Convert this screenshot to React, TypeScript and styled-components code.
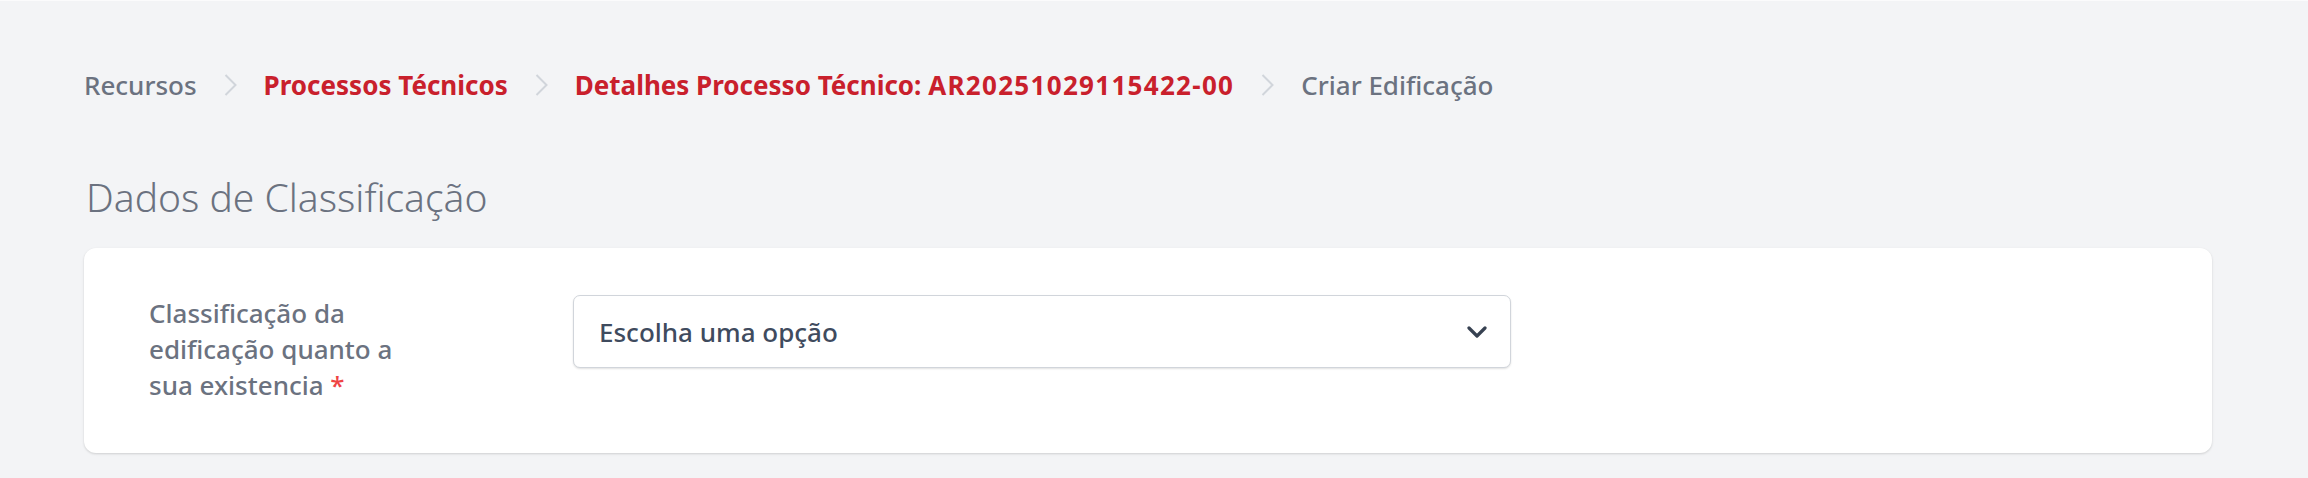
import { styled, createGlobalStyle } from "styled-components";

const GlobalStyle = createGlobalStyle`
    html, body {
        margin: 0;
        padding: 0;
        background: #f3f4f6;
        font-family: "Noto Sans", "Open Sans", sans-serif;
    }
`;

const Page = styled.main`
    min-height: 478px;
    box-sizing: border-box;
    border-top: 1px solid #fbfbfc;
    padding: 66px 96px 0 84px;
`;

const Crumbs = styled.nav`
    display: flex;
    align-items: center;
    gap: 27px;
    height: 36px;
`;

const Crumb = styled.a<{ $active?: boolean }>`
    font-size: 26px;
    line-height: 36px;
    font-weight: ${(p) => (p.$active ? 700 : 500)};
    color: ${(p) => (p.$active ? "#c9202c" : "#6b7280")};
    text-decoration: none;
    white-space: nowrap;
`;

const Code = styled.span`
    letter-spacing: 1.3px;
`;

const Title = styled.h2`
    margin: 70px 0 0 2px;
    font-size: 39px;
    line-height: 48px;
    font-weight: 300;
    color: #6b7280;
`;

const Card = styled.section`
    margin-top: 27px;
    background: #fff;
    border-radius: 12px;
    box-shadow: 0 1px 3px rgba(0, 0, 0, 0.1), 0 1px 2px rgba(0, 0, 0, 0.06);
    padding: 47px 65px 50px;
    display: grid;
    grid-template-columns: 424px 938px;
    align-items: start;
`;

const Label = styled.label`
    max-width: 265px;
    font-size: 26px;
    line-height: 36px;
    font-weight: 500;
    color: #6b7280;
`;

const Required = styled.span`
    color: #ef4444;
`;

const SelectBox = styled.div`
    box-sizing: border-box;
    height: 73px;
    display: flex;
    align-items: center;
    justify-content: space-between;
    padding: 0 23px 0 25px;
    border: 1px solid #d1d5db;
    border-radius: 7px;
    box-shadow: 0 1px 2px rgba(0, 0, 0, 0.12);
    background: #fff;
    font-size: 26px;
    font-weight: 500;
    color: #3f4b5e;
`;

function Separator() {
    return (
        <svg width="13" height="22" viewBox="0 0 13 22" fill="none">
            <polyline points="1.5,1 11.5,11 1.5,21" stroke="#d1d5db" strokeWidth="2" />
        </svg>
    );
}

function ChevronDown() {
    return (
        <svg width="20" height="12" viewBox="0 0 20 12" fill="none">
            <polyline points="2,2 10,10 18,2" stroke="#374151" strokeWidth="3.2" strokeLinecap="round" strokeLinejoin="round" />
        </svg>
    );
}

export default function App() {
    return (
        <>
            <GlobalStyle />
            <Page>
                <Crumbs>
                    <Crumb>Recursos</Crumb>
                    <Separator />
                    <Crumb $active>Processos Técnicos</Crumb>
                    <Separator />
                    <Crumb $active>
                        Detalhes Processo Técnico: <Code>AR20251029115422-00</Code>
                    </Crumb>
                    <Separator />
                    <Crumb>Criar Edificação</Crumb>
                </Crumbs>
                <Title>Dados de Classificação</Title>
                <Card>
                    <Label>
                        Classificação da edificação quanto a sua existencia <Required>*</Required>
                    </Label>
                    <SelectBox>
                        <span>Escolha uma opção</span>
                        <ChevronDown />
                    </SelectBox>
                </Card>
            </Page>
        </>
    );
}
